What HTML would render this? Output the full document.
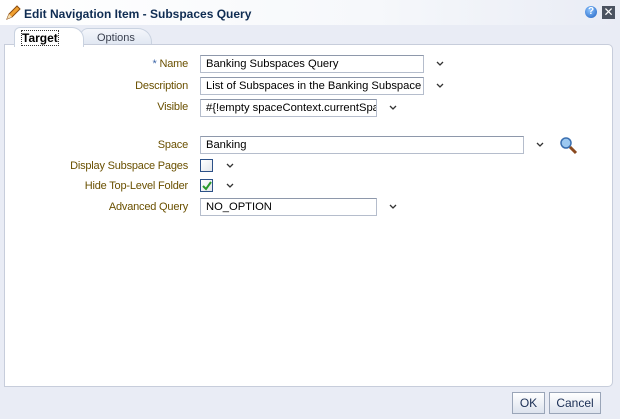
<!DOCTYPE html><html><head><style>
body{margin:0;width:620px;height:419px;overflow:hidden;background:#e9ecf5;font-family:"Liberation Sans",sans-serif;font-size:11px;position:relative}
.a{position:absolute}
.title{left:0;top:0;width:620px;height:25px;background:linear-gradient(90deg,#fff 0,#f6f8fb 60%,#e9ecf5 100%)}
.panel{left:4px;top:44px;width:607px;height:341px;background:#fff;border:1px solid #c7cddb;border-radius:0 5px 5px 0}
.lbl{color:#6a5000;text-align:right;width:130px;left:58px;letter-spacing:-0.2px}
.in{background:#fff;border:1px solid #b5bdcc;border-top-color:#8e98ab;line-height:16px;padding-left:5px;color:#000;overflow:hidden;white-space:nowrap;box-sizing:border-box;height:18px;font-size:11.2px}
.cb{width:13px;height:13px;border:1px solid #2d5188;background:linear-gradient(135deg,#fff,#e3e6ea);box-sizing:border-box}
.btn{top:392px;height:22px;border:1px solid #9aa5b8;background:linear-gradient(#fff,#dde3ee);color:#1b2f55;text-align:center;line-height:20px;box-sizing:border-box;font-size:12px}
</style></head><body>
<div class="a title"></div>
<svg class="a" style="left:5px;top:5px" width="16" height="16"><path d="M2 14 L4 9 L12 1 L15 4 L7 12 Z" fill="#f0a030" stroke="#8a4b10" stroke-width="1"/><path d="M2 14 L4 9 L7 12Z" fill="#f5deb0"/></svg>
<div class="a" style="left:24px;top:7px;font-weight:bold;font-size:12px;color:#0f2c52">Edit Navigation Item - Subspaces Query</div>
<div class="a" style="left:585px;top:6px;width:12px;height:12px;border-radius:50%;background:radial-gradient(circle at 40% 35%,#8cc4ff,#1d5fc0);color:#fff;font-size:10px;font-weight:bold;text-align:center;line-height:12px">?</div>
<div class="a" style="left:602px;top:6px;width:13px;height:13px;background:#4a5260;color:#fff;font-size:12px;text-align:center;line-height:13px">✕</div>
<div class="a" style="left:80px;top:28px;width:70px;height:17px;background:linear-gradient(#f4f6fb,#dfe6f1);border-radius:8px 14px 0 0;border:1px solid #c9d2e0;border-bottom:none"></div>
<div class="a" style="left:97px;top:32px;color:#3b4150">Options</div>
<div class="a panel"></div>
<div class="a" style="left:14px;top:27px;width:68px;height:19px;background:#fff;border-radius:6px 12px 0 0;border:1px solid #c9d2e0;border-bottom:none;z-index:1"></div>
<div class="a" style="left:22px;top:31px;font-weight:bold;font-size:12px;z-index:2;outline:1px dotted #333">Target</div>
<div class="a lbl" style="top:58px"><span style="color:#3d66a8">*</span> Name</div>
<div class="a in" style="left:200px;top:55px;width:224px">Banking Subspaces Query</div>
<div class="a lbl" style="top:80px">Description</div>
<div class="a in" style="left:200px;top:77px;width:224px">List of Subspaces in the Banking Subspace</div>
<div class="a lbl" style="top:101px">Visible</div>
<div class="a in" style="left:200px;top:99px;width:177px">#{!empty spaceContext.currentSpa</div>
<div class="a lbl" style="top:139px">Space</div>
<div class="a in" style="left:200px;top:136px;width:324px">Banking</div>
<div class="a lbl" style="top:160px;left:8px;width:180px">Display Subspace Pages</div>
<div class="a cb" style="left:200px;top:159px"></div>
<div class="a lbl" style="top:180px;left:8px;width:180px">Hide Top-Level Folder</div>
<div class="a cb" style="left:200px;top:179px"></div>
<svg class="a" style="left:202px;top:181px" width="10" height="10"><path d="M1 5 L4 8 L9 1" stroke="#2a9a2a" stroke-width="2" fill="none"/></svg>
<div class="a lbl" style="top:201px">Advanced Query</div>
<div class="a in" style="left:200px;top:198px;width:177px">NO_OPTION</div>
<svg class="a" width="620" height="419" style="left:0;top:0"><g stroke="#333" stroke-width="1.3" fill="none">
<path d="M437 62l3 3 3-3"/><path d="M437 84l3 3 3-3"/><path d="M390 106l3 3 3-3"/><path d="M537 143l3 3 3-3"/><path d="M227 164l3 3 3-3"/><path d="M227 184l3 3 3-3"/><path d="M390 205l3 3 3-3"/></g>
<circle cx="566" cy="143" r="5" fill="#9cc8f0" stroke="#3a6fb0" stroke-width="1.5"/><path d="M570 147l6 6" stroke="#8a4a20" stroke-width="3"/></svg>
<div class="a btn" style="left:512px;width:33px">OK</div>
<div class="a btn" style="left:549px;width:52px">Cancel</div>
</body></html>
